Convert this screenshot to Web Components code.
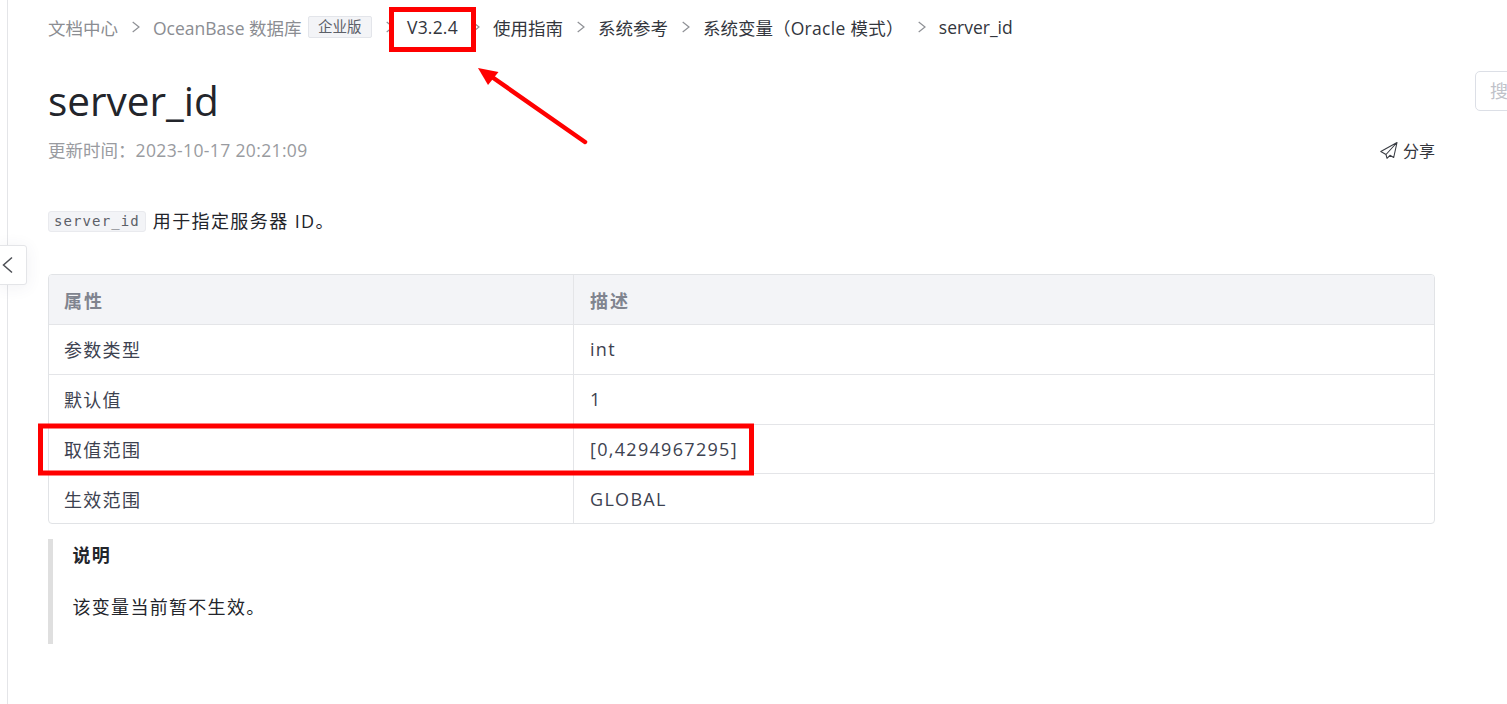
<!DOCTYPE html>
<html lang="zh-CN">
<head>
<meta charset="utf-8">
<title>server_id</title>
<style>
  html, body { margin: 0; height: 100%; background: #fff; overflow: hidden; }
  body { font-family: "Open Sans", "Noto Sans CJK SC", sans-serif; }
</style>
</head>
<body>
<doc-page>
  <doc-breadcrumb>
    <crumb-item muted>文档中心</crumb-item>
    <crumb-item muted>OceanBase 数据库<span slot="tag">企业版</span></crumb-item>
    <crumb-item style="letter-spacing:.2px">V3.2.4</crumb-item>
    <crumb-item>使用指南</crumb-item>
    <crumb-item>系统参考</crumb-item>
    <crumb-item>系统变量<span style="letter-spacing:.3px">（Oracle 模式）</span></crumb-item>
    <crumb-item last>server_id</crumb-item>
  </doc-breadcrumb>
  <doc-title label="更新时间：" updated="2023-10-17 20:21:09">server_id</doc-title>
  <doc-intro code="server_id">用于指定服务器 ID。</doc-intro>
  <doc-table>
    <table-row head><span>属性</span><span slot="value">描述</span></table-row>
    <table-row><span>参数类型</span><span slot="value">int</span></table-row>
    <table-row><span>默认值</span><span slot="value">1</span></table-row>
    <table-row><span>取值范围</span><span slot="value">[0,4294967295]</span></table-row>
    <table-row><span>生效范围</span><span slot="value">GLOBAL</span></table-row>
  </doc-table>
  <doc-note heading="说明">该变量当前暂不生效。</doc-note>
</doc-page>
<side-toggle></side-toggle>
<search-stub></search-stub>
<red-marks></red-marks>

<script>
class DocPage extends HTMLElement {
  constructor() {
    super();
    this.attachShadow({ mode: 'open' });
    this.shadowRoot.innerHTML = `
      <style>
        :host {
          display: block;
          box-sizing: border-box;
          height: 704px;
          margin-left: 7px;
          border-left: 1px solid #e4e5e8;
          padding: 6px 72px 0 40px;
        }
      </style>
      <slot></slot>
    `;
  }
}

class DocBreadcrumb extends HTMLElement {
  constructor() {
    super();
    this.attachShadow({ mode: 'open' });
    this.shadowRoot.innerHTML = `
      <style>
        :host {
          display: flex;
          align-items: center;
          height: 42px;
          font-size: 17.5px;
          white-space: nowrap;
        }
      </style>
      <slot></slot>
    `;
  }
}

class CrumbItem extends HTMLElement {
  constructor() {
    super();
    this.attachShadow({ mode: 'open' });
    this.shadowRoot.innerHTML = `
      <style>
        :host { display: inline-flex; align-items: center; color: #33363d; }
        :host([muted]) { color: #8b8d92; }
        ::slotted([slot=tag]) {
          font-size: 14.5px;
          line-height: 20px;
          padding: 0 9.5px;
          margin-left: 6px;
          color: #5c6068;
          background: #f3f4f7;
          border: 1px solid #e3e5ea;
          border-radius: 2px;
        }
        svg { margin: 0 13px 0 14px; }
        :host([last]) svg { display: none; }
      </style>
      <slot></slot><slot name="tag"></slot>
      <svg width="8" height="12" viewBox="0 0 8 12" fill="none" stroke="#8f9196" stroke-width="1.2"><path d="M.7 1 7 6 .7 11"/></svg>
    `;
  }
}

class DocTitle extends HTMLElement {
  constructor() {
    super();
    this.attachShadow({ mode: 'open' });
    this.shadowRoot.innerHTML = `
      <style>
        :host { display: block; position: relative; padding-top: 22px; }
        h1 { margin: 0; font-size: 40.5px; line-height: 62px; font-weight: 400; color: #23252b; }
        .meta { display: flex; justify-content: space-between; align-items: center; height: 34px; }
        .time { font-size: 17.5px; color: #999ba0; }
        .date { letter-spacing: 0.37px; }
        .share { display: flex; align-items: center; gap: 5px; padding-top: 1px; font-size: 16px; color: #33363d; }
      </style>
      <h1><slot></slot></h1>
      <div class="meta">
        <span class="time"><span class="label"></span><span class="date"></span></span>
        <span class="share">
          <svg width="18" height="18" viewBox="0 0 18 18" fill="none" stroke="#3a3d44" stroke-width="1.1" stroke-linejoin="round"><path d="M17 1.5 .8 10.5l5.2 3 1 3.8 3-3 3.7 2.2zM17 1.5 6 13.5"/></svg>
          分享
        </span>
      </div>
    `;
    this.shadowRoot.querySelector('.label').textContent = this.getAttribute('label');
    this.shadowRoot.querySelector('.date').textContent = this.getAttribute('updated');
  }
}

class DocIntro extends HTMLElement {
  constructor() {
    super();
    this.attachShadow({ mode: 'open' });
    this.shadowRoot.innerHTML = `
      <style>
        :host { display: flex; align-items: center; height: 28px; margin: 41px 0 0; font-size: 18px; letter-spacing: 1.4px; color: #23252b; }
        code {
          font-family: "DejaVu Sans Mono", monospace;
          font-size: 14px;
          letter-spacing: 1.1px;
          line-height: 19px;
          padding: 0 5px;
          margin-right: 7px;
          color: #5c6068;
          background: #f3f4f7;
          border: 1px solid #e9eaee;
          border-radius: 3px;
        }
      </style>
      <code></code><span style="position:relative;top:-1px"><slot></slot></span>
    `;
    this.shadowRoot.querySelector('code').textContent = this.getAttribute('code');
  }
}

class DocTable extends HTMLElement {
  constructor() {
    super();
    this.attachShadow({ mode: 'open' });
    this.shadowRoot.innerHTML = `
      <style>
        :host {
          display: block;
          margin-top: 39px;
          border: 1px solid #e1e3e6;
          border-radius: 4px;
          overflow: hidden;
        }
      </style>
      <slot></slot>
    `;
  }
}

class TableRow extends HTMLElement {
  constructor() {
    super();
    this.attachShadow({ mode: 'open' });
    this.shadowRoot.innerHTML = `
      <style>
        :host {
          display: grid;
          grid-template-columns: 524px 1fr;
          height: 49.75px;
          box-sizing: border-box;
          font-size: 18px;
          letter-spacing: 1.3px;
          color: #3d4250;
          border-top: 1px solid #e4e5e8;
        }
        :host(:first-child) { border-top: 0; height: 49px; }
        :host([head]) { background: #f3f4f7; color: #80848f; font-weight: 700; letter-spacing: 2px; }
        .cell { display: flex; align-items: center; padding-left: 15px; }
        .cell:first-child { letter-spacing: 2px; padding-bottom: 2px; }
        :host([head]) .cell:first-child { padding-bottom: 0; }
        .cell + .cell { border-left: 1px solid #e4e5e8; padding-left: 16px; }
      </style>
      <div class="cell"><slot></slot></div>
      <div class="cell"><slot name="value"></slot></div>
    `;
  }
}

class DocNote extends HTMLElement {
  constructor() {
    super();
    this.attachShadow({ mode: 'open' });
    this.shadowRoot.innerHTML = `
      <style>
        :host {
          display: block;
          box-sizing: border-box;
          height: 105px;
          margin-top: 15px;
          padding: 2px 0 0 19.5px;
          border-left: 5px solid #dfdfdf;
          font-size: 18px;
          letter-spacing: 1.3px;
          color: #23252b;
        }
        .heading { font-weight: 700; line-height: 28px; }
        .body { margin-top: 24px; line-height: 28px; }
      </style>
      <div class="heading"></div>
      <div class="body"><slot></slot></div>
    `;
    this.shadowRoot.querySelector('.heading').textContent = this.getAttribute('heading');
  }
}

class SideToggle extends HTMLElement {
  constructor() {
    super();
    this.attachShadow({ mode: 'open' });
    this.shadowRoot.innerHTML = `
      <style>
        :host {
          position: absolute;
          left: -1px;
          top: 245px;
          width: 28px;
          height: 40px;
          box-sizing: border-box;
          display: flex;
          align-items: center;
          padding-left: 2px;
          background: #fff;
          border: 1px solid #e4e5e8;
          border-radius: 0 3px 3px 0;
          box-shadow: 0 2px 16px rgba(60, 70, 100, 0.08);
        }
      </style>
      <svg width="11" height="18" viewBox="0 0 11 18" fill="none" stroke="#4c4f55" stroke-width="1.5"><path d="M10 1.5 1.5 9l8.5 7.5"/></svg>
    `;
  }
}

class SearchStub extends HTMLElement {
  constructor() {
    super();
    this.attachShadow({ mode: 'open' });
    this.shadowRoot.innerHTML = `
      <style>
        :host {
          position: absolute;
          left: 1475px;
          top: 71px;
          width: 60px;
          height: 40px;
          box-sizing: border-box;
          padding: 0 0 3px 14px;
          display: flex;
          align-items: center;
          font-size: 18px;
          color: #bfc2c9;
          border: 1px solid #dcdfe6;
          border-radius: 5px;
        }
      </style>
      搜索
    `;
  }
}

// red annotations drawn over the screenshot
class RedMarks extends HTMLElement {
  constructor() {
    super();
    this.attachShadow({ mode: 'open' });
    this.shadowRoot.innerHTML = `
      <style>
        :host { position: absolute; inset: 0; pointer-events: none; }
        svg { display: block; }
      </style>
      <svg width="1507" height="704" fill="none" stroke="#ff0000">
        <rect x="391.5" y="9.5" width="82" height="40" stroke-width="5"/>
        <rect x="40.5" y="426" width="711" height="47" stroke-width="5"/>
        <path d="M585 142 492 77" stroke-width="4.5" stroke-linecap="round"/>
        <path d="M478 68 498.5 72 488 85z" fill="#ff0000" stroke="none"/>
      </svg>
    `;
  }
}

customElements.define('doc-page', DocPage);
customElements.define('doc-breadcrumb', DocBreadcrumb);
customElements.define('crumb-item', CrumbItem);
customElements.define('doc-title', DocTitle);
customElements.define('doc-intro', DocIntro);
customElements.define('doc-table', DocTable);
customElements.define('table-row', TableRow);
customElements.define('doc-note', DocNote);
customElements.define('side-toggle', SideToggle);
customElements.define('search-stub', SearchStub);
customElements.define('red-marks', RedMarks);
</script>
</body>
</html>
